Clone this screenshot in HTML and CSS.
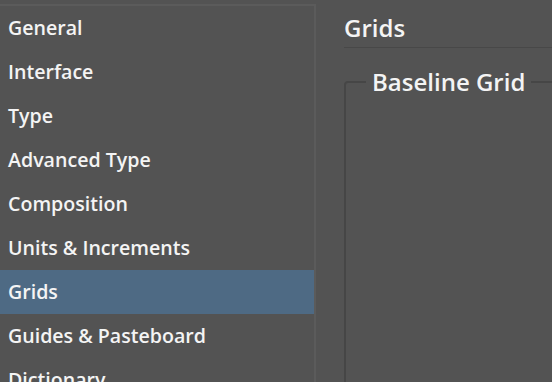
FILE: index.html
```html
<!DOCTYPE html>
<html lang="en">
<head>
  <meta charset="UTF-8" />
  <title>Preferences</title>
  <link rel="stylesheet" href="styles.css">
</head>
<body>
  <div class="prefs">
    <ul class="sidebar">
      <li>General</li>
      <li>Interface</li>
      <li>Type</li>
      <li>Advanced Type</li>
      <li>Composition</li>
      <li>Units &amp; Increments</li>
      <li class="selected">Grids</li>
      <li>Guides &amp; Pasteboard</li>
      <li>Dictionary</li>
    </ul>

    <section class="panel">
      <h2 class="panel-title">Grids</h2>
      <fieldset class="group">
        <legend>Baseline Grid</legend>
      </fieldset>
    </section>
  </div>
</body>
</html>
```

FILE: styles.css
```css
html, body {
  margin: 0;
  height: 100%;
  overflow: hidden;
}

body {
  background: #535353;
  color: #f4f4f4;
  font-family: 'Open Sans', sans-serif;
  font-weight: 600;
}

.prefs {
  display: flex;
  height: 100%;
}

.sidebar {
  list-style: none;
  margin: 4px 0 0;
  padding: 0;
  width: 314px;
  flex: none;
  border-top: 2px solid #5b5b5b;
  border-right: 2px solid #5b5b5b;
}

.sidebar li {
  height: 44px;
  line-height: 44px;
  padding-left: 8px;
  font-size: 19.6px;
  white-space: nowrap;
}

.sidebar li.selected {
  background: #4e6a84;
}

.panel {
  flex: 1;
  padding-left: 28px;
  display: flex;
  flex-direction: column;
}

.panel-title {
  margin: 0;
  height: 47px;
  line-height: 56px;
  font-size: 24px;
  font-weight: 600;
  border-bottom: 1px solid #484848;
}

.group {
  margin: 22px -20px 0 0;
  padding: 0;
  flex: 1;
  border: 2px solid #464646;
  border-radius: 4px;
  border-bottom: none;
  min-height: 320px;
}

.group legend {
  margin-left: 20px;
  padding: 0 6px;
  font-size: 24px;
  line-height: 24px;
}
```
